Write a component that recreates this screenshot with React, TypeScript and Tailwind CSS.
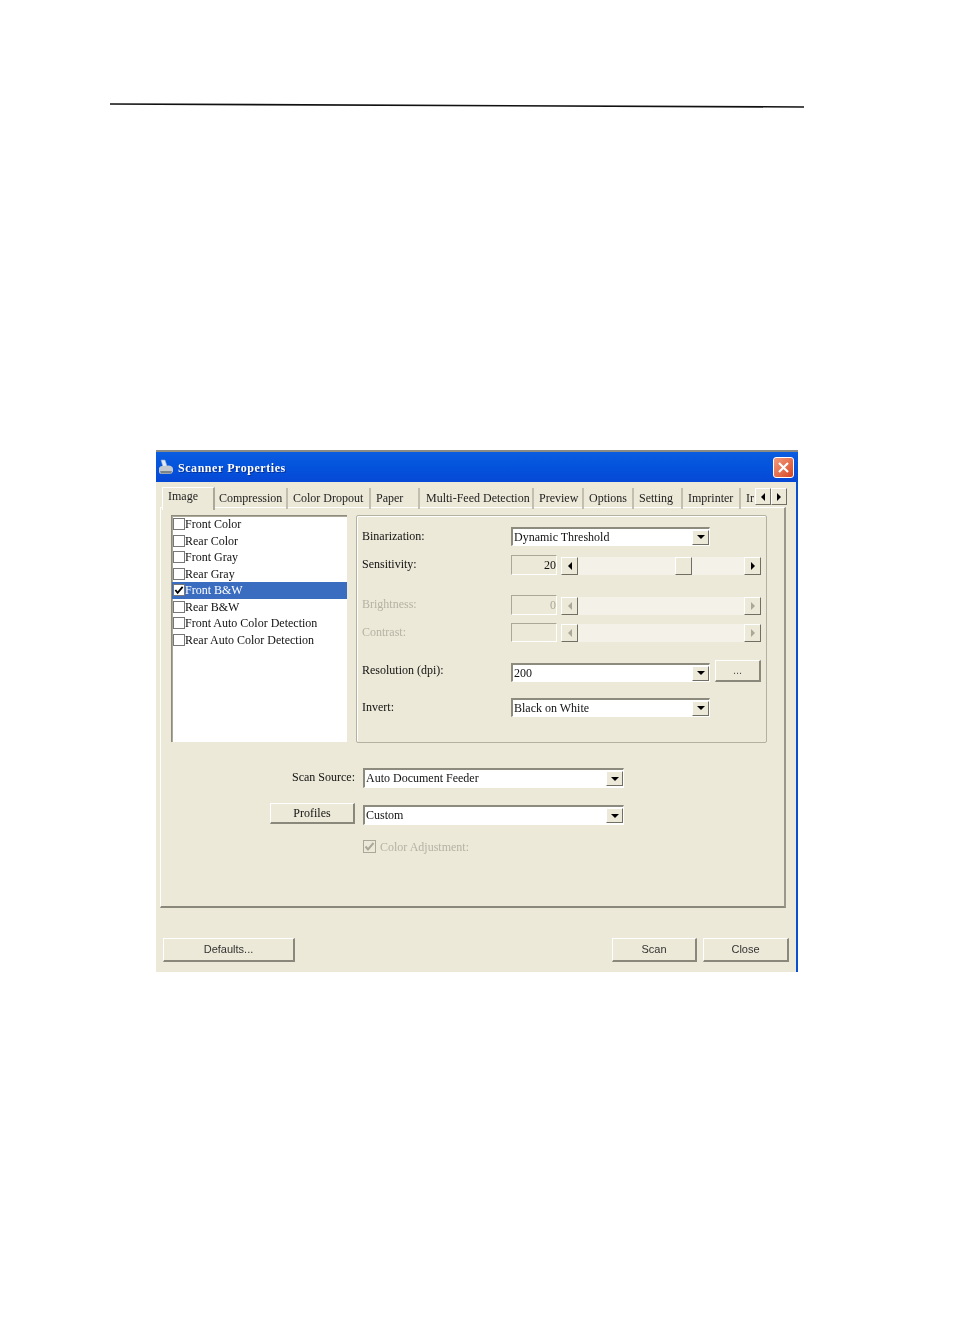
const serif = 'font-["Liberation_Serif",serif]';
const sans = "font-['Liberation_Sans',sans-serif]";

const tabs = [
  { label: 'Compression', width: 'w-[73px]', pad: 'pl-[4px]' },
  { label: 'Color Dropout', width: 'w-[83px]', pad: 'pl-[5px]' },
  { label: 'Paper', width: 'w-[49px]', pad: 'pl-[5px]' },
  { label: 'Multi-Feed Detection', width: 'w-[114px]', pad: 'pl-[6px]' },
  { label: 'Preview', width: 'w-[50px]', pad: 'pl-[5px]' },
  { label: 'Options', width: 'w-[50px]', pad: 'pl-[5px]' },
  { label: 'Setting', width: 'w-[49px]', pad: 'pl-[5px]' },
  { label: 'Imprinter', width: 'w-[58px]', pad: 'pl-[5px]' },
];

const imageTypes = [
  'Front Color',
  'Rear Color',
  'Front Gray',
  'Rear Gray',
  'Front B&W',
  'Rear B&W',
  'Front Auto Color Detection',
  'Rear Auto Color Detection',
];

function Arrow({ dir, muted }: { dir: 'left' | 'right' | 'down'; muted?: boolean }) {
  const points = dir === 'left' ? '6,0 6,8 2,4' : dir === 'right' ? '2,0 2,8 6,4' : '0,2 8,2 4,6';
  return (
    <svg width="8" height="8" viewBox="0 0 8 8" className={muted ? 'text-[#aca899]' : 'text-black'}>
      <polygon points={points} fill="currentColor" />
    </svg>
  );
}

function BevelBox({ className, dir, muted }: { className: string; dir: 'left' | 'right' | 'down'; muted?: boolean }) {
  return (
    <div
      className={`flex shrink-0 items-center justify-center bg-[#ece9d8] border-t border-l border-t-white border-l-white border-r border-b border-r-[#716f64] border-b-[#716f64] ${className}`}
    >
      <Arrow dir={dir} muted={muted} />
    </div>
  );
}

function Combo({ value, width, height = 'h-[19px]' }: { value: string; width: string; height?: string }) {
  return (
    <div
      className={`flex items-center justify-between bg-white border-t-2 border-l-2 border-t-[#8d8b7d] border-l-[#8d8b7d] border-r border-b border-r-white border-b-white pl-[1px] ${width} ${height}`}
    >
      <span className={`${serif} -mt-[1px] text-[12px] leading-none text-[#111]`}>{value}</span>
      <BevelBox className="w-[17px] h-[15px]" dir="down" />
    </div>
  );
}

function Field({ value, muted, height = 'h-[20px]' }: { value?: string; muted?: boolean; height?: string }) {
  return (
    <div
      className={`flex w-[46px] shrink-0 items-center justify-end border-t border-l border-t-[#aca899] border-l-[#aca899] border-r border-b border-r-white border-b-white ${height}`}
    >
      <span className={`${serif} text-[12px] leading-none ${muted ? 'text-[#aca899]' : 'text-[#111]'}`}>{value}</span>
    </div>
  );
}

function Scrollbar({ thumb, muted }: { thumb?: boolean; muted?: boolean }) {
  return (
    <div className="ml-[4px] flex h-[18px] w-[200px] self-end items-stretch bg-[#f3f1e8]">
      <BevelBox className="w-[17px]" dir="left" muted={muted} />
      <div className="flex flex-1 justify-end">
        {thumb && (
          <div className="mr-[52px] w-[17px] bg-[#ece9d8] border-t border-l border-t-white border-l-white border-r border-b border-r-[#716f64] border-b-[#716f64]" />
        )}
      </div>
      <BevelBox className="w-[17px]" dir="right" muted={muted} />
    </div>
  );
}

function Label({ text, muted }: { text: string; muted?: boolean }) {
  return (
    <span className={`${serif} -mt-[2px] block w-[149px] shrink-0 text-[12px] leading-none ${muted ? 'text-[#b5b2a4]' : 'text-[#111]'}`}>
      {text}
    </span>
  );
}

function Button({ label, className, font }: { label: string; className: string; font: string }) {
  return (
    <div
      className={`flex items-center justify-center bg-[#ece9d8] border-t border-l border-t-white border-l-white border-r-2 border-b-2 border-r-[#8a887a] border-b-[#8a887a] ${font} ${className}`}
    >
      {label}
    </div>
  );
}

function ScannerIcon() {
  return (
    <svg width="16" height="16" viewBox="0 0 16 16" className="shrink-0">
      <path d="M3 1 L7 1 L9 7 L5 8 Z" fill="#dfe8f4" stroke="#8fa6c6" strokeWidth="0.6" />
      <path d="M1 9 Q2 6.5 5 7 L11 6.5 Q15 7 15 10 L15 12.5 Q14 15 11 15 L4 15 Q1 15 1 12.5 Z" fill="#c3c9cf" />
      <path d="M2 12 L14 12 L13 14.5 L3 14.5 Z" fill="#79838c" />
    </svg>
  );
}

export default function App() {
  return (
    <div className="h-[1336px] w-[954px] overflow-hidden bg-white pt-[103px]">
      <svg width="954" height="6" className="block">
        <line x1="110" y1="1" x2="804" y2="4" stroke="#111" strokeWidth="1.6" />
      </svg>

      {/* Scanner dialog */}
      <div className="ml-[156px] mt-[341px] flex h-[522px] w-[642px] flex-col bg-[#ece9d8] blur-[0.35px]">
        <div className="flex h-[32px] shrink-0 items-center border-t-2 border-t-[#8b8b86] bg-gradient-to-b from-[#0a5ce0] via-[#0453dc] to-[#0648d6] pl-[2px] pr-[4px]">
          <ScannerIcon />
          <span className={`${serif} ml-[4px] mt-[2px] flex-1 text-[12px] font-bold tracking-[0.55px] text-white [text-shadow:1px_1px_0_#0a2f90]`}>
            Scanner Properties
          </span>
          <div className="flex h-[21px] w-[21px] items-center justify-center rounded-[3px] border border-white bg-gradient-to-br from-[#f09a7c] to-[#d8431f]">
            <svg width="13" height="13" viewBox="0 0 13 13">
              <path d="M2 2 L11 11 M11 2 L2 11" stroke="white" strokeWidth="2.2" />
            </svg>
          </div>
        </div>

        <div className="flex flex-1 flex-col border-r-2 border-r-[#0a4fd0]">
          <div className="ml-[4px] mr-[10px] mt-[25px] flex h-[401px] flex-col border-l border-t border-l-white border-t-white border-r-2 border-b-2 border-r-[#9a988a] border-b-[#8a887a] relative">
            {/* Tab strip */}
            <div className={`absolute -top-[20px] left-[1px] flex h-[21px] items-stretch text-[12px] leading-none text-[#222] ${serif}`}>
              <div className="-mt-[1px] -mb-[1px] flex w-[53px] items-start justify-center border-l border-t border-l-white border-t-white border-r-2 border-r-[#aca899] bg-[#ece9d8] pr-[10px] pt-[2px]">
                Image
              </div>
              {tabs.map((tab) => (
                <div key={tab.label} className={`flex items-center whitespace-nowrap border-r-2 border-r-[#c2bfb0] pb-[2px] ${tab.pad} ${tab.width}`}>
                  {tab.label}
                </div>
              ))}
              <div className="flex w-[14px] items-center overflow-hidden pb-[2px] pl-[5px]">Ir</div>
              <BevelBox className="h-[17px] w-[16px] self-start" dir="left" />
              <BevelBox className="h-[17px] w-[16px] self-start" dir="right" />
            </div>

            <div className="flex pl-[10px] pt-[7px]">
              {/* Image type list */}
              <div className={`flex h-[227px] w-[176px] shrink-0 flex-col border-t border-l border-t-[#8d8b7d] border-l-[#8d8b7d] shadow-[inset_1px_1px_0_#aca899] bg-white ${serif}`}>
                {imageTypes.map((name) => {
                  const selected = name === 'Front B&W';
                  return (
                    <div
                      key={name}
                      className={`flex h-[16.5px] items-center pl-[1px] text-[12px] leading-none ${selected ? 'bg-[#3a6cc0] text-white' : 'text-[#111]'}`}
                    >
                      <div className="flex h-[12px] w-[12px] shrink-0 items-center justify-center border border-[#777] bg-white">
                        {selected && (
                          <svg width="10" height="10" viewBox="0 0 11 11">
                            <path d="M1.5 5.5 L4 8.5 L9.5 2" fill="none" stroke="black" strokeWidth="2" />
                          </svg>
                        )}
                      </div>
                      <span>{name}</span>
                    </div>
                  );
                })}
              </div>

              {/* Binarization settings */}
              <div className="ml-[9px] flex h-[228px] w-[411px] flex-col rounded-[2px] border border-[#b3b1a2] pl-[5px] pt-[11px] shadow-[inset_1px_1px_0_white]">
                <div className="flex h-[19px] items-center">
                  <Label text="Binarization:" />
                  <Combo value="Dynamic Threshold" width="w-[199px]" />
                </div>
                <div className="mt-[9px] flex h-[20px] items-center">
                  <Label text="Sensitivity:" />
                  <Field value="20" />
                  <Scrollbar thumb />
                </div>
                <div className="mt-[20px] flex h-[20px] items-center">
                  <Label text="Brightness:" muted />
                  <Field value="0" muted />
                  <Scrollbar muted />
                </div>
                <div className="mt-[8px] flex h-[19px] items-center">
                  <Label text="Contrast:" muted />
                  <Field muted height="h-[19px]" />
                  <Scrollbar muted />
                </div>
                <div className="mt-[18px] flex h-[22px] items-center">
                  <Label text="Resolution (dpi):" />
                  <div className="self-end">
                    <Combo value="200" width="w-[199px]" />
                  </div>
                  <Button label="..." className="ml-[5px] h-[22px] w-[46px] text-[11px] text-[#555]" font={sans} />
                </div>
                <div className="mt-[16px] flex h-[19px] items-center">
                  <Label text="Invert:" />
                  <Combo value="Black on White" width="w-[199px]" />
                </div>
              </div>
            </div>

            {/* Source and profile */}
            <div className={`mt-[25px] flex h-[20px] items-center ${serif}`}>
              <span className="-mt-[2px] w-[194px] text-right text-[12px] leading-none text-[#111]">Scan Source:</span>
              <div className="ml-[8px]">
                <Combo value="Auto Document Feeder" width="w-[261px]" height="h-[20px]" />
              </div>
            </div>
            <div className="mt-[15px] flex h-[22px] items-start">
              <Button label="Profiles" className="ml-[109px] h-[21px] w-[85px] text-[12px] text-[#111]" font={serif} />
              <div className="ml-[8px] mt-[2px]">
                <Combo value="Custom" width="w-[261px]" height="h-[20px]" />
              </div>
            </div>
            <div className={`mt-[15px] ml-[202px] flex items-center ${serif}`}>
              <div className="flex h-[13px] w-[13px] items-center justify-center border border-[#aca899] bg-[#ece9d8]">
                <svg width="11" height="11" viewBox="0 0 11 11">
                  <path d="M1.5 5.5 L4 8.5 L9.5 2" fill="none" stroke="#aca899" strokeWidth="2" />
                </svg>
              </div>
              <span className="ml-[4px] text-[12px] leading-none text-[#b5b2a4]">Color Adjustment:</span>
            </div>
          </div>

          {/* Dialog buttons */}
          <div className="mt-[30px] flex pl-[7px] pr-[7px] text-[11px] text-[#333]">
            <Button label="Defaults..." className="h-[24px] w-[132px]" font={sans} />
            <Button label="Scan" className="ml-auto h-[24px] w-[85px]" font={sans} />
            <Button label="Close" className="ml-[6px] h-[24px] w-[86px]" font={sans} />
          </div>
        </div>
      </div>
    </div>
  );
}
